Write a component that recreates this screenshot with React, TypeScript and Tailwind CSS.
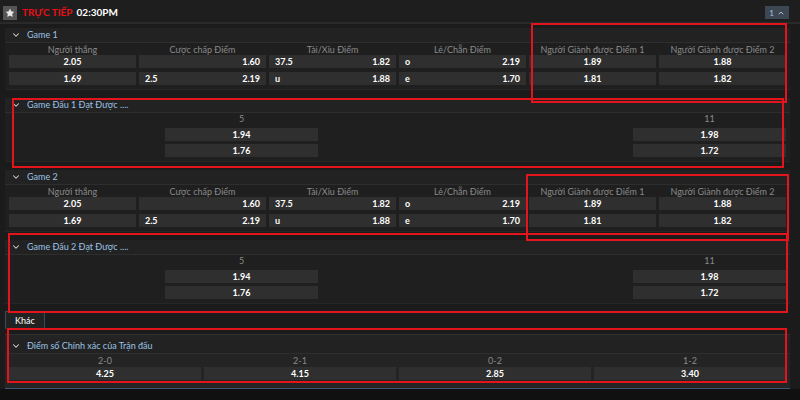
import React from "react";
import { Star, ChevronDown, ChevronUp } from "lucide-react";

type Cell = { left?: string; value: string };

const gameCols = [
  "Người thắng",
  "Cược chấp Điểm",
  "Tài/Xỉu Điểm",
  "Lẻ/Chẵn Điểm",
  "Người Giành được Điểm 1",
  "Người Giành được Điểm 2",
];

const gameRows: Cell[][] = [
  [
    { value: "2.05" },
    { left: "", value: "1.60" },
    { left: "37.5", value: "1.82" },
    { left: "o", value: "2.19" },
    { value: "1.89" },
    { value: "1.88" },
  ],
  [
    { value: "1.69" },
    { left: "2.5", value: "2.19" },
    { left: "u", value: "1.88" },
    { left: "e", value: "1.70" },
    { value: "1.81" },
    { value: "1.82" },
  ],
];

const OddBtn = ({ cell }: { cell: Cell }) => (
  <div
    className={`h-[13px] bg-[#2f2f2f] flex items-center px-[6px] text-[9px] font-bold text-white ${
      cell.left !== undefined ? "justify-between" : "justify-center"
    }`}
  >
    {cell.left !== undefined && <span>{cell.left}</span>}
    <span>{cell.value}</span>
  </div>
);

const SectionHead = ({ title }: { title: string }) => (
  <div className="h-[15px] flex items-center gap-[6px] pl-[6px] bg-[#222222] border-b border-[#2e2e2e]">
    <ChevronDown size={10} strokeWidth={2.5} className="text-[#d8d8d8]" />
    <span className="text-[9px] text-[#9cc3e6]">{title}</span>
  </div>
);

const GameSection = ({ title }: { title: string }) => (
  <div className="bg-[#1f1f1f] border-b border-[#262626]">
    <SectionHead title={title} />
    <div className="px-[4px] pb-[4px]">
      <div className="grid grid-cols-6 gap-x-[3px] h-[12px] items-center">
        {gameCols.map((c) => (
          <div key={c} className="text-center text-[9px] text-[#8a8a8a] leading-none">
            {c}
          </div>
        ))}
      </div>
      <div className="flex flex-col gap-[4px]">
        {gameRows.map((row, i) => (
          <div key={i} className="grid grid-cols-6 gap-x-[3px]">
            {row.map((cell, j) => (
              <OddBtn key={j} cell={cell} />
            ))}
          </div>
        ))}
      </div>
    </div>
  </div>
);

const PointSection = ({ title }: { title: string }) => (
  <div className="bg-[#1f1f1f] border-b border-[#262626]">
    <SectionHead title={title} />
    <div className="px-[4px] pb-[4px]">
      <div className="grid grid-cols-5 gap-x-[3px]">
        <div />
        <div className="flex flex-col gap-[3px]">
          <div className="h-[12px] flex items-center justify-center text-[9px] text-[#8a8a8a]">5</div>
          <OddBtn cell={{ value: "1.94" }} />
          <OddBtn cell={{ value: "1.76" }} />
        </div>
        <div />
        <div />
        <div className="flex flex-col gap-[3px]">
          <div className="h-[12px] flex items-center justify-center text-[9px] text-[#8a8a8a]">11</div>
          <OddBtn cell={{ value: "1.98" }} />
          <OddBtn cell={{ value: "1.72" }} />
        </div>
      </div>
    </div>
  </div>
);

const scores = [
  { label: "2-0", value: "4.25" },
  { label: "2-1", value: "4.15" },
  { label: "0-2", value: "2.85" },
  { label: "1-2", value: "3.40" },
];

const marks = [
  "left-[531px] top-[23px] w-[256px] h-[80px]",
  "left-[12px] top-[98px] w-[772px] h-[70px]",
  "left-[526px] top-[174px] w-[263px] h-[67px]",
  "left-[8px] top-[233px] w-[780px] h-[80px]",
  "left-[7px] top-[328px] w-[780px] h-[55px]",
];

export default function App() {
  return (
    <div className="relative w-[800px] h-[400px] overflow-hidden bg-[#1b1b1b] font-['Lato',sans-serif]">
      {/* top bar */}
      <div className="h-[24px] flex items-center justify-between pl-[3px] pr-[11px] pt-[3px] bg-[#1e1e1e] border-b-2 border-[#2a2a2a]">
        <div className="flex items-center gap-[5px]">
          <div className="w-[14px] h-[14px] bg-[#555555] flex items-center justify-center">
            <Star size={10} fill="#e8e8e8" strokeWidth={0} />
          </div>
          <span className="text-[10px] font-bold text-[#e8101a]">TRỰC TIẾP</span>
          <span className="text-[10px] font-bold text-white -ml-[1px]">02:30PM</span>
        </div>
        <div className="h-[13px] w-[24px] bg-[#3d4754] flex items-center justify-center gap-[3px] text-[8px] text-[#a9c3dc]">
          <span>1</span>
          <ChevronUp size={8} strokeWidth={3} />
        </div>
      </div>

      <div className="pl-[5px] pr-[10px] pt-[4px]">
        <div className="flex flex-col gap-[8px]">
          <GameSection title="Game 1" />
          <PointSection title="Game Đấu 1 Đạt Được ...." />
          <GameSection title="Game 2" />
          <PointSection title="Game Đấu 2 Đạt Được ...." />
        </div>

        <div className="mt-[7px] flex">
          <div className="h-[18px] px-[9px] flex items-center bg-[#222222] border border-b-0 border-[#3a4a5a] text-[9px] text-white">
            Khác
          </div>
        </div>

        <div className="mt-[5px] bg-[#242424] border-t border-[#303030] pt-[4px] pb-[4px] border-b border-b-[#3a5673]">
          <SectionHead title="Điểm số Chính xác của Trận đấu" />
          <div className="px-[4px] pb-[4px]">
            <div className="grid grid-cols-4 gap-x-[3px]">
              {scores.map((s) => (
                <div key={s.label} className="flex flex-col">
                  <div className="h-[13px] flex items-center justify-center text-[9px] text-[#8a8a8a]">
                    {s.label}
                  </div>
                  <OddBtn cell={{ value: s.value }} />
                </div>
              ))}
            </div>
          </div>
        </div>
      </div>

      <div className="h-[14px] bg-[#101010]" />

      {marks.map((m) => (
        <div key={m} className={`absolute border-2 border-[#e3141b] pointer-events-none ${m}`} />
      ))}
    </div>
  );
}
